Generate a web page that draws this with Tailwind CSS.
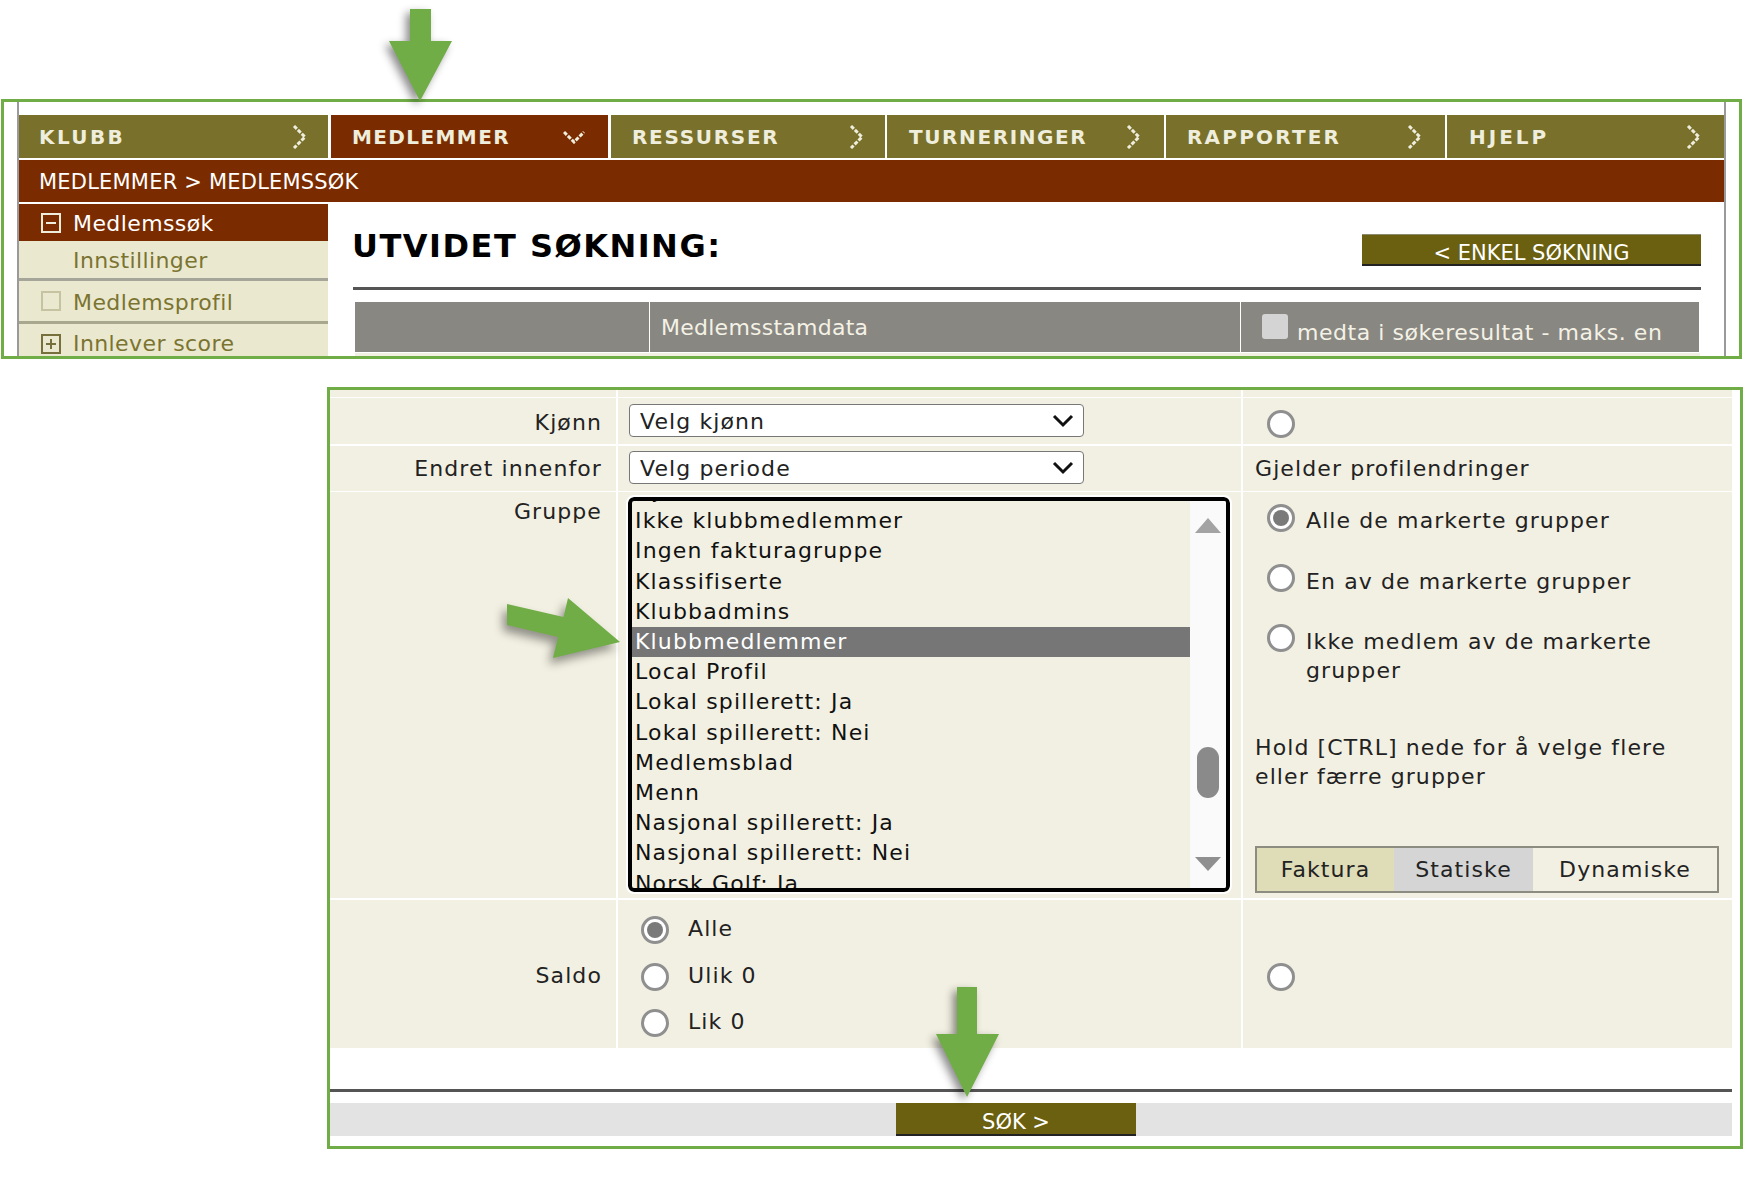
<!DOCTYPE html>
<html lang="en">
<head>
  <meta charset="UTF-8" />
  <meta name="viewport" content="width=device-width, initial-scale=1.0"/>
  <title>Medlemssøk</title>
  <script src="https://cdn.jsdelivr.net/npm/@tailwindcss/browser@4"></script>
</head>
<body class="bg-white font-['DejaVu_Sans',sans-serif] text-[22px] text-[#222] tracking-[1.1px]">
  <div class="relative w-[1744px] h-[1189px] overflow-hidden pt-[99px]">

    <!-- Top panel -->
    <div class="ml-[1px] w-[1741px] h-[260px] border-[3px] border-[#70ad47] overflow-hidden">
      <div class="ml-[13px] mr-[13px] h-full border-x-2 border-[#9a9a9a] pt-[13px]">

        <!-- Nav -->
        <div class="flex text-[20px] font-bold text-[#efeddc]">
          <div class="w-[309px] h-[43px] bg-[#78702b] flex items-center justify-between pl-[20px] pr-[20px]">
            <span class="pt-[1px] tracking-[2.4px]">KLUBB</span>
            <svg width="16" height="24" viewBox="0 0 16 24" fill="none" stroke="#efeddc" stroke-width="3"><path d="M2 1 L13 12 L2 23" stroke-dasharray="4 1.5"/></svg>
          </div>
          <div class="ml-[3px] w-[277px] h-[43px] bg-[#7a2c00] flex items-center justify-between pl-[21px] pr-[23px]">
            <span class="pt-[1px] tracking-[1.4px]">MEDLEMMER</span>
            <svg width="22" height="14" viewBox="0 0 22 14" fill="none" stroke="#efeddc" stroke-width="3"><path d="M1 2 L11 12 L21 2" stroke-dasharray="4 1.5"/></svg>
          </div>
          <div class="ml-[3px] w-[274px] h-[43px] bg-[#78702b] flex items-center justify-between pl-[21px] pr-[20px]">
            <span class="pt-[1px] tracking-[1.7px]">RESSURSER</span>
            <svg width="16" height="24" viewBox="0 0 16 24" fill="none" stroke="#efeddc" stroke-width="3"><path d="M2 1 L13 12 L2 23" stroke-dasharray="4 1.5"/></svg>
          </div>
          <div class="ml-[2px] w-[277px] h-[43px] bg-[#78702b] flex items-center justify-between pl-[22px] pr-[22px]">
            <span class="pt-[1px] tracking-[1.6px]">TURNERINGER</span>
            <svg width="16" height="24" viewBox="0 0 16 24" fill="none" stroke="#efeddc" stroke-width="3"><path d="M2 1 L13 12 L2 23" stroke-dasharray="4 1.5"/></svg>
          </div>
          <div class="ml-[2px] w-[279px] h-[43px] bg-[#78702b] flex items-center justify-between pl-[21px] pr-[22px]">
            <span class="pt-[1px] tracking-[2.2px]">RAPPORTER</span>
            <svg width="16" height="24" viewBox="0 0 16 24" fill="none" stroke="#efeddc" stroke-width="3"><path d="M2 1 L13 12 L2 23" stroke-dasharray="4 1.5"/></svg>
          </div>
          <div class="ml-[2px] w-[277px] h-[43px] bg-[#78702b] flex items-center justify-between pl-[22px] pr-[22px]">
            <span class="pt-[1px] tracking-[3px]">HJELP</span>
            <svg width="16" height="24" viewBox="0 0 16 24" fill="none" stroke="#efeddc" stroke-width="3"><path d="M2 1 L13 12 L2 23" stroke-dasharray="4 1.5"/></svg>
          </div>
        </div>

        <!-- Breadcrumb -->
        <div class="mt-[2px] h-[42px] bg-[#7a2c00] text-white text-[21px] tracking-[0.2px] flex items-center pl-[20px] pt-[4px]">MEDLEMMER &gt; MEDLEMSSØK</div>

        <div class="mt-[2px] flex">
          <!-- Sidebar -->
          <div class="w-[309px] shrink-0 text-[#7a7430] tracking-[0.4px]">
            <div class="h-[37px] bg-[#7a2c00] text-white flex items-center pl-[22px] gap-[12px]">
              <span class="w-[20px] h-[20px] border-2 border-[#efeddc] flex items-center justify-center"><span class="w-[10px] h-[2px] bg-[#efeddc]"></span></span>
              <span class="pt-[1px]">Medlemssøk</span>
            </div>
            <div class="h-[40px] bg-[#ebe8d0] border-b-[3px] border-[#a5a59a] flex items-center pl-[54px] pt-[1px]">Innstillinger</div>
            <div class="h-[43px] bg-[#ebe8d0] border-b-[3px] border-[#a8a88e] flex items-center pl-[22px] gap-[12px]">
              <span class="w-[20px] h-[20px] border-2 border-[#c6c3a3]"></span>
              <span class="pt-[3px]">Medlemsprofil</span>
            </div>
            <div class="h-[40px] bg-[#ebe8d0] flex items-center pl-[22px] gap-[12px]">
              <span class="relative w-[20px] h-[20px] border-2 border-[#77703c] flex items-center justify-center">
                <span class="w-[10px] h-[2px] bg-[#77703c]"></span>
                <span class="absolute w-[2px] h-[10px] bg-[#77703c]"></span>
              </span>
              <span class="-mt-[2px]">Innlever score</span>
            </div>
          </div>

          <!-- Content -->
          <div class="flex-1 pl-[25px] pr-[23px] tracking-normal">
            <div class="h-[83px] pt-[26px] flex justify-between items-start">
              <h1 class="-ml-[1px] text-[32px] leading-[32px] font-bold text-black tracking-[1.5px]">UTVIDET SØKNING:</h1>
              <div class="mt-[4px] w-[339px] h-[32px] bg-[#6b5f10] border-t border-[#8a8a70] border-b-2 border-b-[#222] text-white text-[21px] flex items-center justify-center pt-[8px]">&lt; ENKEL SØKNING</div>
            </div>
            <div class="h-[3px] bg-[#555]"></div>
            <div class="mt-[12px] ml-[2px] w-[1345px] grid grid-cols-[294px_590px_458px] gap-x-[1px] h-[50px] text-[#f4f2e6]">
              <div class="bg-[#898781]"></div>
              <div class="bg-[#898781] pl-[11px] flex items-center tracking-[0.25px]">Medlemsstamdata</div>
              <div class="bg-[#898781] pl-[21px] flex items-start pt-[12px] gap-[9px] tracking-[0.55px]">
                <span class="w-[26px] h-[25px] rounded-[3px] bg-[#d4d4d4]"></span>
                <span class="mt-[2px]">medta i søkeresultat - maks. en</span>
              </div>
            </div>
            <div class="mt-[1px] ml-[2px] w-[1345px] h-[8px] bg-[#f2f0e2]"></div>
          </div>
        </div>
      </div>
    </div>

    <!-- Bottom panel -->
    <div class="mt-[28px] ml-[327px] w-[1416px] h-[762px] border-[3px] border-[#70ad47]">
      <div class="w-[1402px]">
        <div class="grid grid-cols-[286px_623px_489px] gap-x-[2px] h-[7px]">
          <div class="bg-[#f2f0e2]"></div><div class="bg-[#f2f0e2]"></div><div class="bg-[#f2f0e2]"></div>
        </div>

        <!-- Kjønn -->
        <div class="mt-[1px] grid grid-cols-[286px_623px_489px] gap-x-[2px] h-[46px]">
          <div class="bg-[#f2f0e2] flex items-center justify-end pr-[14px] pt-[2px]">Kjønn</div>
          <div class="bg-[#f2f0e2] pl-[11px] pt-[6px]">
            <div class="w-[455px] h-[33px] bg-white border border-[#777] rounded-[4px] flex items-center justify-between pl-[10px] pr-[9px]">
              <span class="pt-[2px]">Velg kjønn</span>
              <svg width="22" height="14" viewBox="0 0 22 14" fill="none" stroke="#111" stroke-width="3"><path d="M2 2 L11 11 L20 2"/></svg>
            </div>
          </div>
          <div class="bg-[#f2f0e2] pl-[24px] flex items-center">
            <span class="mt-[6px] w-[28px] h-[28px] rounded-full border-[3px] border-[#8f8f8f] bg-white"></span>
          </div>
        </div>

        <!-- Endret innenfor -->
        <div class="mt-[2px] grid grid-cols-[286px_623px_489px] gap-x-[2px] h-[45px]">
          <div class="bg-[#f2f0e2] flex items-center justify-end pr-[14px]">Endret innenfor</div>
          <div class="bg-[#f2f0e2] pl-[11px] pt-[5px]">
            <div class="w-[455px] h-[33px] bg-white border border-[#777] rounded-[4px] flex items-center justify-between pl-[10px] pr-[9px]">
              <span class="pt-[2px]">Velg periode</span>
              <svg width="22" height="14" viewBox="0 0 22 14" fill="none" stroke="#111" stroke-width="3"><path d="M2 2 L11 11 L20 2"/></svg>
            </div>
          </div>
          <div class="bg-[#f2f0e2] pl-[12px] flex items-center">Gjelder profilendringer</div>
        </div>

        <!-- Gruppe -->
        <div class="mt-[1px] grid grid-cols-[286px_623px_489px] gap-x-[2px] h-[406px]">
          <div class="bg-[#f2f0e2] pr-[14px] pt-[5px] text-right leading-[29px]">Gruppe</div>
          <div class="bg-[#f2f0e2] pl-[10px] pt-[5px]">
            <div class="w-[602px] h-[395px] border-4 border-black rounded-[6px] outline-2 outline-white flex overflow-hidden text-[#111] tracking-[1.15px]">
              <div class="flex-1 overflow-hidden">
                <div class="-mt-[25px] leading-[30.2px]">
                  <div class="pl-[3px]">Gjester</div>
                  <div class="pl-[3px]">Ikke klubbmedlemmer</div>
                  <div class="pl-[3px]">Ingen fakturagruppe</div>
                  <div class="pl-[3px]">Klassifiserte</div>
                  <div class="pl-[3px]">Klubbadmins</div>
                  <div class="pl-[3px] bg-[#767676] text-white">Klubbmedlemmer</div>
                  <div class="pl-[3px]">Local Profil</div>
                  <div class="pl-[3px]">Lokal spillerett: Ja</div>
                  <div class="pl-[3px]">Lokal spillerett: Nei</div>
                  <div class="pl-[3px]">Medlemsblad</div>
                  <div class="pl-[3px]">Menn</div>
                  <div class="pl-[3px]">Nasjonal spillerett: Ja</div>
                  <div class="pl-[3px]">Nasjonal spillerett: Nei</div>
                  <div class="pl-[3px]">Norsk Golf: Ja</div>
                </div>
              </div>
              <!-- Scrollbar -->
              <div class="w-[36px] bg-[#fafafa] flex flex-col items-center pt-[17px]">
                <svg width="26" height="15" viewBox="0 0 26 15" fill="#a3a3a3"><path d="M13 0 L26 15 L0 15 Z"/></svg>
                <div class="mt-[214px] w-[22px] h-[51px] rounded-full bg-[#8a8a8a]"></div>
                <div class="mt-[59px]"><svg width="26" height="14" viewBox="0 0 26 14" fill="#8f8f8f"><path d="M0 0 L26 0 L13 14 Z"/></svg></div>
              </div>
            </div>
          </div>
          <div class="bg-[#f2f0e2] pt-[14px] pr-[13px] leading-[29px]">
            <div class="flex pl-[24px] gap-[11px]">
              <span class="-mt-[2px] shrink-0 w-[28px] h-[28px] rounded-full border-[3px] border-[#8f8f8f] bg-white flex items-center justify-center"><span class="w-[16px] h-[16px] rounded-full bg-[#7a7a7a]"></span></span>
              <span>Alle de markerte grupper</span>
            </div>
            <div class="mt-[32px] flex pl-[24px] gap-[11px]">
              <span class="-mt-[3px] shrink-0 w-[28px] h-[28px] rounded-full border-[3px] border-[#8f8f8f] bg-white"></span>
              <span>En av de markerte grupper</span>
            </div>
            <div class="mt-[31px] flex pl-[24px] gap-[11px]">
              <span class="-mt-[3px] shrink-0 w-[28px] h-[28px] rounded-full border-[3px] border-[#8f8f8f] bg-white"></span>
              <span>Ikke medlem av de markerte grupper</span>
            </div>
            <div class="mt-[48px] pl-[12px]">Hold [CTRL] nede for å velge flere eller færre grupper</div>
            <div class="mt-[55px] ml-[12px] h-[47px] border-2 border-[#8c8c80] grid grid-cols-[137px_139px_1fr] text-center leading-[43px]">
              <div class="bg-[#dfdcb8]">Faktura</div>
              <div class="bg-[#d5d5d5]">Statiske</div>
              <div>Dynamiske</div>
            </div>
          </div>
        </div>

        <!-- Saldo -->
        <div class="mt-[2px] grid grid-cols-[286px_623px_489px] gap-x-[2px] h-[148px]">
          <div class="bg-[#f2f0e2] flex items-center justify-end pr-[14px] pt-[2px]">Saldo</div>
          <div class="bg-[#f2f0e2] pl-[23px] pt-[16px] flex flex-col gap-[18.5px]">
            <div class="flex items-center gap-[19px] h-[28px]">
              <span class="w-[28px] h-[28px] rounded-full border-[3px] border-[#8f8f8f] bg-white flex items-center justify-center"><span class="w-[16px] h-[16px] rounded-full bg-[#7a7a7a]"></span></span>
              <span class="-mt-[4px]">Alle</span>
            </div>
            <div class="flex items-center gap-[19px] h-[28px]">
              <span class="w-[28px] h-[28px] rounded-full border-[3px] border-[#8f8f8f] bg-white"></span>
              <span class="-mt-[3px]">Ulik 0</span>
            </div>
            <div class="flex items-center gap-[19px] h-[28px]">
              <span class="w-[28px] h-[28px] rounded-full border-[3px] border-[#8f8f8f] bg-white"></span>
              <span class="-mt-[3px]">Lik 0</span>
            </div>
          </div>
          <div class="bg-[#f2f0e2] pl-[24px] flex items-center">
            <span class="mt-[6px] w-[28px] h-[28px] rounded-full border-[3px] border-[#8f8f8f] bg-white"></span>
          </div>
        </div>

        <div class="mt-[41px] h-[3px] bg-[#555]"></div>
        <div class="mt-[11px] h-[33px] bg-[#e3e3e3] pl-[566px] tracking-normal">
          <div class="w-[240px] h-[33px] bg-[#6b5f10] border-b-2 border-[#222] text-white text-[21px] flex items-center justify-center pt-[9px]">SØK &gt;</div>
        </div>
      </div>
    </div>

    <!-- Green arrows -->
    <svg class="absolute left-[380px] top-0 drop-shadow-[-4px_4px_4px_rgba(0,0,0,0.45)]" width="80" height="110" viewBox="380 0 80 110"><path fill="#70ad47" d="M410 9 H431 V41 H452 L420 101 L389 41 H410 Z"/></svg>
    <svg class="absolute left-[495px] top-[590px] drop-shadow-[-4px_6px_5px_rgba(0,0,0,0.4)]" width="135" height="80" viewBox="495 590 135 80"><path fill="#70ad47" d="M507 604 L563.5 617 L568 598 L620 642 L553 658 L558 637 L507 625 Z"/></svg>
    <svg class="absolute left-[925px] top-[980px] drop-shadow-[-4px_4px_4px_rgba(0,0,0,0.45)]" width="85" height="125" viewBox="925 980 85 125"><path fill="#70ad47" d="M957 987 H977 V1034 H999 L967 1097 L936 1034 H957 Z"/></svg>
  </div>
</body>
</html>
